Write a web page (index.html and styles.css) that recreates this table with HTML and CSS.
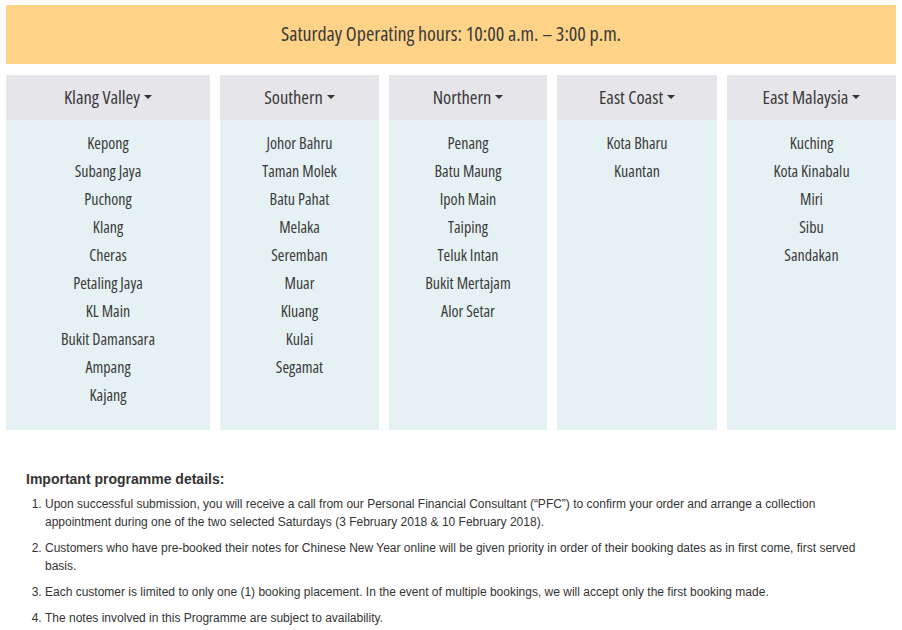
FILE: index.html
```html
<!DOCTYPE html>
<html>
<head>
<meta charset="utf-8">
<link rel="stylesheet" href="styles.css">
</head>
<body>
<div class="page">
  <div class="banner">Saturday Operating hours: 10:00 a.m. – 3:00 p.m.</div>
  <div class="regions">
    <div class="region">
      <div class="region-head">Klang Valley <span class="caret"></span></div>
      <ul class="branches">
        <li>Kepong</li><li>Subang Jaya</li><li>Puchong</li><li>Klang</li><li>Cheras</li><li>Petaling Jaya</li><li>KL Main</li><li>Bukit Damansara</li><li>Ampang</li><li>Kajang</li>
      </ul>
    </div>
    <div class="region">
      <div class="region-head">Southern <span class="caret"></span></div>
      <ul class="branches">
        <li>Johor Bahru</li><li>Taman Molek</li><li>Batu Pahat</li><li>Melaka</li><li>Seremban</li><li>Muar</li><li>Kluang</li><li>Kulai</li><li>Segamat</li>
      </ul>
    </div>
    <div class="region">
      <div class="region-head">Northern <span class="caret"></span></div>
      <ul class="branches">
        <li>Penang</li><li>Batu Maung</li><li>Ipoh Main</li><li>Taiping</li><li>Teluk Intan</li><li>Bukit Mertajam</li><li>Alor Setar</li>
      </ul>
    </div>
    <div class="region">
      <div class="region-head">East Coast <span class="caret"></span></div>
      <ul class="branches">
        <li>Kota Bharu</li><li>Kuantan</li>
      </ul>
    </div>
    <div class="region">
      <div class="region-head">East Malaysia <span class="caret"></span></div>
      <ul class="branches">
        <li>Kuching</li><li>Kota Kinabalu</li><li>Miri</li><li>Sibu</li><li>Sandakan</li>
      </ul>
    </div>
  </div>
  <div class="details">
    <h4 class="details-title">Important programme details:</h4>
    <ol class="details-list">
      <li>Upon successful submission, you will receive a call from our Personal Financial Consultant (“PFC”) to confirm your order and arrange a collection appointment during one of the two selected Saturdays (3 February 2018 &amp; 10 February 2018).</li>
      <li>Customers who have pre-booked their notes for Chinese New Year online will be given priority in order of their booking dates as in first come, first served basis.</li>
      <li>Each customer is limited to only one (1) booking placement. In the event of multiple bookings, we will accept only the first booking made.</li>
      <li>The notes involved in this Programme are subject to availability.</li>
    </ol>
  </div>
</div>
</body>
</html>
```
FILE: styles.css
```css
html, body {
  margin: 0;
  padding: 0;
  background: #ffffff;
}
.page {
  padding: 5px 6px 0 6px;
  color: #333333;
}
.banner {
  height: 59px;
  background: #ffd387;
  display: flex;
  align-items: center;
  justify-content: center;
  font-family: "Open Sans", "Liberation Sans", sans-serif;
  font-stretch: 75%;
  font-size: 20px;
  padding-bottom: 2px;
  box-sizing: border-box;
  color: #3a3a3a;
}
.regions {
  margin-top: 11px;
  display: grid;
  grid-template-columns: 204px 159px 158px 160px 169px;
  column-gap: 10px;
  font-family: "Open Sans", "Liberation Sans", sans-serif;
  font-stretch: 75%;
}
.region {
  display: flex;
  flex-direction: column;
  background: #e5f1f2;
}
.region-head {
  height: 45px;
  background: #e6e5e9;
  display: flex;
  align-items: center;
  justify-content: center;
  padding-bottom: 2px;
  box-sizing: border-box;
  font-size: 18.5px;
  color: #3a3a3a;
}
.caret {
  display: inline-block;
  width: 0;
  height: 0;
  margin-left: 4px;
  border-left: 4px solid transparent;
  border-right: 4px solid transparent;
  border-top: 4px solid #333333;
}
.branches {
  list-style: none;
  margin: 0;
  padding: 9px 0 21px 0;
  text-align: center;
  font-size: 16px;
  line-height: 28px;
  color: #3a3a3a;
}
.details {
  padding: 40px 20px 0 20px;
  font-family: "Liberation Sans", Arial, sans-serif;
  color: #333333;
}
.details-title {
  margin: 0 0 7px 0;
  font-size: 14px;
  font-weight: bold;
  line-height: 18px;
}
.details-list {
  margin: 0;
  padding: 0 0 0 19px;
  font-size: 12px;
  line-height: 18px;
}
.details-list li {
  margin-bottom: 8px;
}
```
